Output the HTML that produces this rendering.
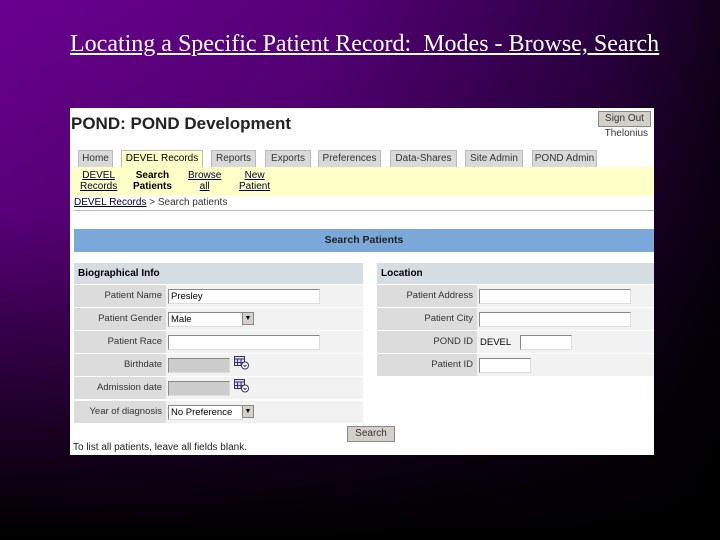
<!DOCTYPE html>
<html><head><meta charset="utf-8"><style>
*{margin:0;padding:0;box-sizing:border-box}
body{width:720px;height:540px;overflow:hidden;position:relative;background:linear-gradient(to bottom,rgba(0,0,0,0) 0%,rgba(0,0,0,0.15) 40%,rgba(0,0,0,0.75) 80%,#000 100%),linear-gradient(100deg,#6a0090 0%,#560078 40%,#2a0040 75%,#000 100%);font-family:"Liberation Sans",sans-serif}
.t{position:absolute;left:70px;top:31px;font-family:"Liberation Serif",serif;font-size:24px;color:#fff;text-decoration:underline;white-space:nowrap;letter-spacing:0px}
.s{position:absolute;left:70px;top:108px;width:584px;height:347px;background:#fff;font-size:10px;color:#000}
.a{position:absolute;white-space:nowrap}
.tab{position:absolute;top:42px;height:17px;background:#d9d9d9;border:1px solid #bbb;border-bottom:none;font-size:10px;color:#333;text-align:center;line-height:16px}
.lbl{position:absolute;background:#dcdcdc;text-align:right;padding-right:4px;font-size:9.5px;color:#333;line-height:22px}
.row{position:absolute;background:#f2f2f2;height:22px}
.in{position:absolute;height:15px;border:1px solid #888;border-right-color:#ddd;border-bottom-color:#ddd;background:#fff;font-size:9.5px;line-height:13px;padding-left:2px}
.sel{position:absolute;width:12px;height:13px;background:#d4d0c8;border:1px solid #888;font-size:7px;text-align:center;line-height:11px}
.cal{position:absolute;width:16px;height:14px}
</style></head><body>
<div class="t">Locating a Specific Patient Record:&nbsp; Modes - Browse, Search</div>
<div class="s">
<div class="a" style="left:1px;top:6px;font-size:17px;font-weight:bold;color:#222">POND: POND Development</div>
<div class="a" style="left:528px;top:3px;width:53px;height:16px;background:#d4d0c8;border:1px solid #888;text-align:center;line-height:14px;font-size:10px;color:#333">Sign Out</div>
<div class="a" style="right:6px;top:20px;font-size:10px;color:#333">Thelonius</div>
<div class="tab" style="left:8px;width:35px">Home</div>
<div class="tab" style="left:51px;width:82px;background:#ffffc8;height:18px;color:#000">DEVEL Records</div>
<div class="tab" style="left:141px;width:45px">Reports</div>
<div class="tab" style="left:195px;width:46px">Exports</div>
<div class="tab" style="left:248px;width:63px">Preferences</div>
<div class="tab" style="left:320px;width:67px">Data-Shares</div>
<div class="tab" style="left:395px;width:58px">Site Admin</div>
<div class="tab" style="left:462px;width:65px">POND Admin</div>
<div class="a" style="left:0;top:59px;width:584px;height:29px;background:#ffffc8"></div>
<div class="a" style="left:10px;top:62px;font-size:10px;line-height:11px;text-align:center;color:#003;text-decoration:underline">DEVEL<br>Records</div>
<div class="a" style="left:63px;top:62px;font-size:10px;line-height:11px;text-align:center;font-weight:bold">Search<br>Patients</div>
<div class="a" style="left:118px;top:62px;font-size:10px;line-height:11px;text-align:center;color:#003;text-decoration:underline">Browse<br>all</div>
<div class="a" style="left:169px;top:62px;font-size:10px;line-height:11px;text-align:center;color:#003;text-decoration:underline">New<br>Patient</div>
<div class="a" style="left:4px;top:89px;font-size:10px;color:#333"><u style="color:#003">DEVEL Records</u> &gt; Search patients</div>
<div class="a" style="left:4px;top:102px;width:580px;height:1px;background:#bbb"></div>
<div class="a" style="left:4px;top:121px;width:580px;height:23px;background:#7aa8d8;text-align:center;line-height:23px;font-weight:bold;font-size:10.5px;color:#222">Search Patients</div>
<div class="a" style="left:4px;top:155px;width:289px;height:21px;background:#d5dde3;font-weight:bold;font-size:10px;line-height:21px;padding-left:4px">Biographical Info</div>
<div class="a" style="left:307px;top:155px;width:277px;height:21px;background:#d5dde3;font-weight:bold;font-size:10px;line-height:21px;padding-left:4px">Location</div>
<div class="row" style="left:4px;top:177px;width:289px"></div>
<div class="row" style="left:4px;top:200px;width:289px"></div>
<div class="row" style="left:4px;top:223px;width:289px"></div>
<div class="row" style="left:4px;top:246px;width:289px"></div>
<div class="row" style="left:4px;top:269px;width:289px"></div>
<div class="row" style="left:4px;top:293px;width:289px"></div>
<div class="row" style="left:307px;top:177px;width:277px"></div>
<div class="row" style="left:307px;top:200px;width:277px"></div>
<div class="row" style="left:307px;top:223px;width:277px"></div>
<div class="row" style="left:307px;top:246px;width:277px"></div>
<div class="lbl" style="left:4px;top:177px;width:92px">Patient Name</div>
<div class="lbl" style="left:4px;top:200px;width:92px">Patient Gender</div>
<div class="lbl" style="left:4px;top:223px;width:92px">Patient Race</div>
<div class="lbl" style="left:4px;top:246px;width:92px">Birthdate</div>
<div class="lbl" style="left:4px;top:269px;width:92px">Admission date</div>
<div class="lbl" style="left:4px;top:293px;width:92px">Year of diagnosis</div>
<div class="in" style="left:98px;top:181px;width:152px">Presley</div>
<div class="in" style="left:98px;top:204px;width:75px">Male</div><div class="sel" style="left:172px;top:204px">▼</div>
<div class="in" style="left:98px;top:227px;width:152px"></div>
<div class="in" style="left:98px;top:250px;width:62px;background:#ccc"></div>
<div class="in" style="left:98px;top:273px;width:62px;background:#ccc"></div>
<svg class="cal" style="left:164px;top:248px" viewBox="0 0 16 14"><rect x="0.5" y="0.5" width="10" height="9" fill="#dde" stroke="#336"/><path d="M0 3h11M3.5 3v7M7 3v7M0 6.5h11" stroke="#336"/><circle cx="11" cy="9.5" r="3.5" fill="#fff" stroke="#336"/><path d="M9.5 9l1.5 1.5 1.5-1.5" stroke="#336" fill="none"/></svg>
<svg class="cal" style="left:164px;top:271px" viewBox="0 0 16 14"><rect x="0.5" y="0.5" width="10" height="9" fill="#dde" stroke="#336"/><path d="M0 3h11M3.5 3v7M7 3v7M0 6.5h11" stroke="#336"/><circle cx="11" cy="9.5" r="3.5" fill="#fff" stroke="#336"/><path d="M9.5 9l1.5 1.5 1.5-1.5" stroke="#336" fill="none"/></svg>
<div class="in" style="left:98px;top:297px;width:75px">No Preference</div><div class="sel" style="left:172px;top:297px">▼</div>
<div class="lbl" style="left:307px;top:177px;width:100px">Patient Address</div>
<div class="lbl" style="left:307px;top:200px;width:100px">Patient City</div>
<div class="lbl" style="left:307px;top:223px;width:100px">POND ID</div>
<div class="lbl" style="left:307px;top:246px;width:100px">Patient ID</div>
<div class="in" style="left:409px;top:181px;width:152px"></div>
<div class="in" style="left:409px;top:204px;width:152px"></div>
<div class="a" style="left:410px;top:229px;font-size:9.5px">DEVEL</div>
<div class="in" style="left:450px;top:227px;width:52px"></div>
<div class="in" style="left:409px;top:250px;width:52px"></div>
<div class="a" style="left:277px;top:318px;width:48px;height:16px;background:#d4d0c8;border:1px solid #888;text-align:center;line-height:14px;font-size:10px;color:#333">Search</div>
<div class="a" style="left:3px;top:334px;font-size:10px;color:#222">To list all patients, leave all fields blank.</div>
</div>
</body></html>
